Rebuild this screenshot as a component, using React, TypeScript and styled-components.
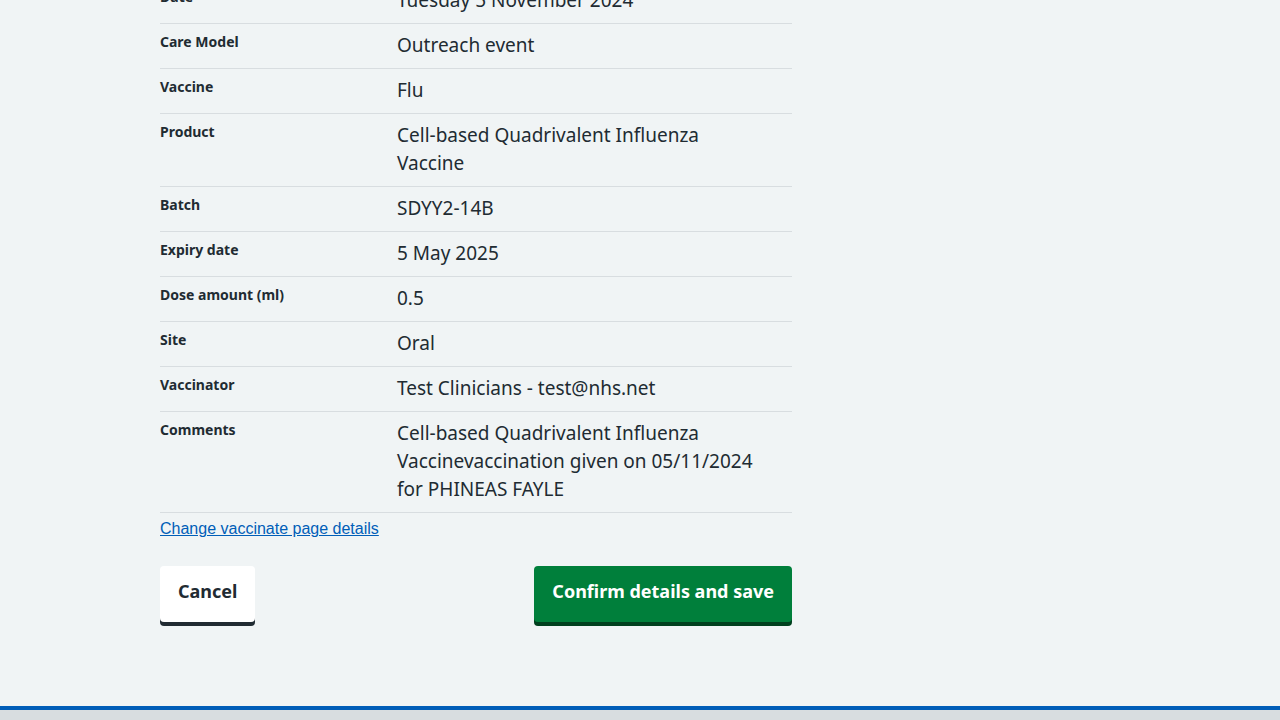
import React from "react";
import styled, { createGlobalStyle } from "styled-components";

const COLORS = {
  bg: "#f0f4f5",
  text: "#212b32",
  border: "#d8dde0",
  link: "#005eb8",
  green: "#007f3b",
  greenDark: "#00401e",
  white: "#ffffff",
};

const GlobalStyle = createGlobalStyle`
  html, body {
    margin: 0;
    padding: 0;
    background: ${COLORS.bg};
    color: ${COLORS.text};
    font-family: "Noto Sans", "Open Sans", sans-serif;
  }
  #root {
    min-height: 100vh;
    display: flex;
    flex-direction: column;
  }
`;

// the page is scrolled a little: the first row sits partly above the fold
const Main = styled.main`
  flex: 1;
  width: 632px;
  margin: -21px 0 0 160px;
  padding-bottom: 80px;
`;

const SummaryList = styled.dl`
  margin: 0;
`;

const Row = styled.div`
  display: grid;
  grid-template-columns: 237px 1fr;
  border-bottom: 1px solid ${COLORS.border};
`;

const Key = styled.dt`
  padding: 8px 0;
  font-size: 14px;
  line-height: 20px;
  font-weight: 700;
`;

const Value = styled.dd`
  margin: 0;
  padding: 7px 28px 9px 0;
  font-size: 19px;
  line-height: 28px;
`;

const ChangeLink = styled.a`
  display: inline-block;
  margin-top: 6px;
  font-family: "Liberation Sans", Arial, sans-serif;
  font-size: 16px;
  line-height: 20px;
  color: ${COLORS.link};
  text-decoration: underline;
`;

const Actions = styled.div`
  display: flex;
  justify-content: space-between;
  align-items: flex-start;
  margin-top: 27px;
`;

const Button = styled.button<{ $primary?: boolean }>`
  height: 56px;
  padding: 0 18px 6px;
  border: none;
  border-radius: 4px;
  font-family: "Noto Sans", "Open Sans", sans-serif;
  font-size: 18px;
  font-weight: 700;
  cursor: pointer;
  background: ${(p) => (p.$primary ? COLORS.green : COLORS.white)};
  color: ${(p) => (p.$primary ? COLORS.white : COLORS.text)};
  box-shadow: 0 4px 0 ${(p) => (p.$primary ? COLORS.greenDark : COLORS.text)};
`;

const Footer = styled.footer`
  height: 10px;
  background: ${COLORS.border};
  border-top: 4px solid ${COLORS.link};
`;

const rows: [string, string][] = [
  ["Date", "Tuesday 5 November 2024"],
  ["Care Model", "Outreach event"],
  ["Vaccine", "Flu"],
  ["Product", "Cell-based Quadrivalent Influenza Vaccine"],
  ["Batch", "SDYY2-14B"],
  ["Expiry date", "5 May 2025"],
  ["Dose amount (ml)", "0.5"],
  ["Site", "Oral"],
  ["Vaccinator", "Test Clinicians - test@nhs.net"],
  [
    "Comments",
    "Cell-based Quadrivalent Influenza Vaccinevaccination given on 05/11/2024 for PHINEAS FAYLE",
  ],
];

const App = () => {
  return (
    <>
      <GlobalStyle />
      <Main>
        <SummaryList>
          {rows.map(([key, value]) => (
            <Row key={key}>
              <Key>{key}</Key>
              <Value>{value}</Value>
            </Row>
          ))}
        </SummaryList>
        <ChangeLink href="#">Change vaccinate page details</ChangeLink>
        <Actions>
          <Button>Cancel</Button>
          <Button $primary>Confirm details and save</Button>
        </Actions>
      </Main>
      <Footer />
    </>
  );
};

export default App;
